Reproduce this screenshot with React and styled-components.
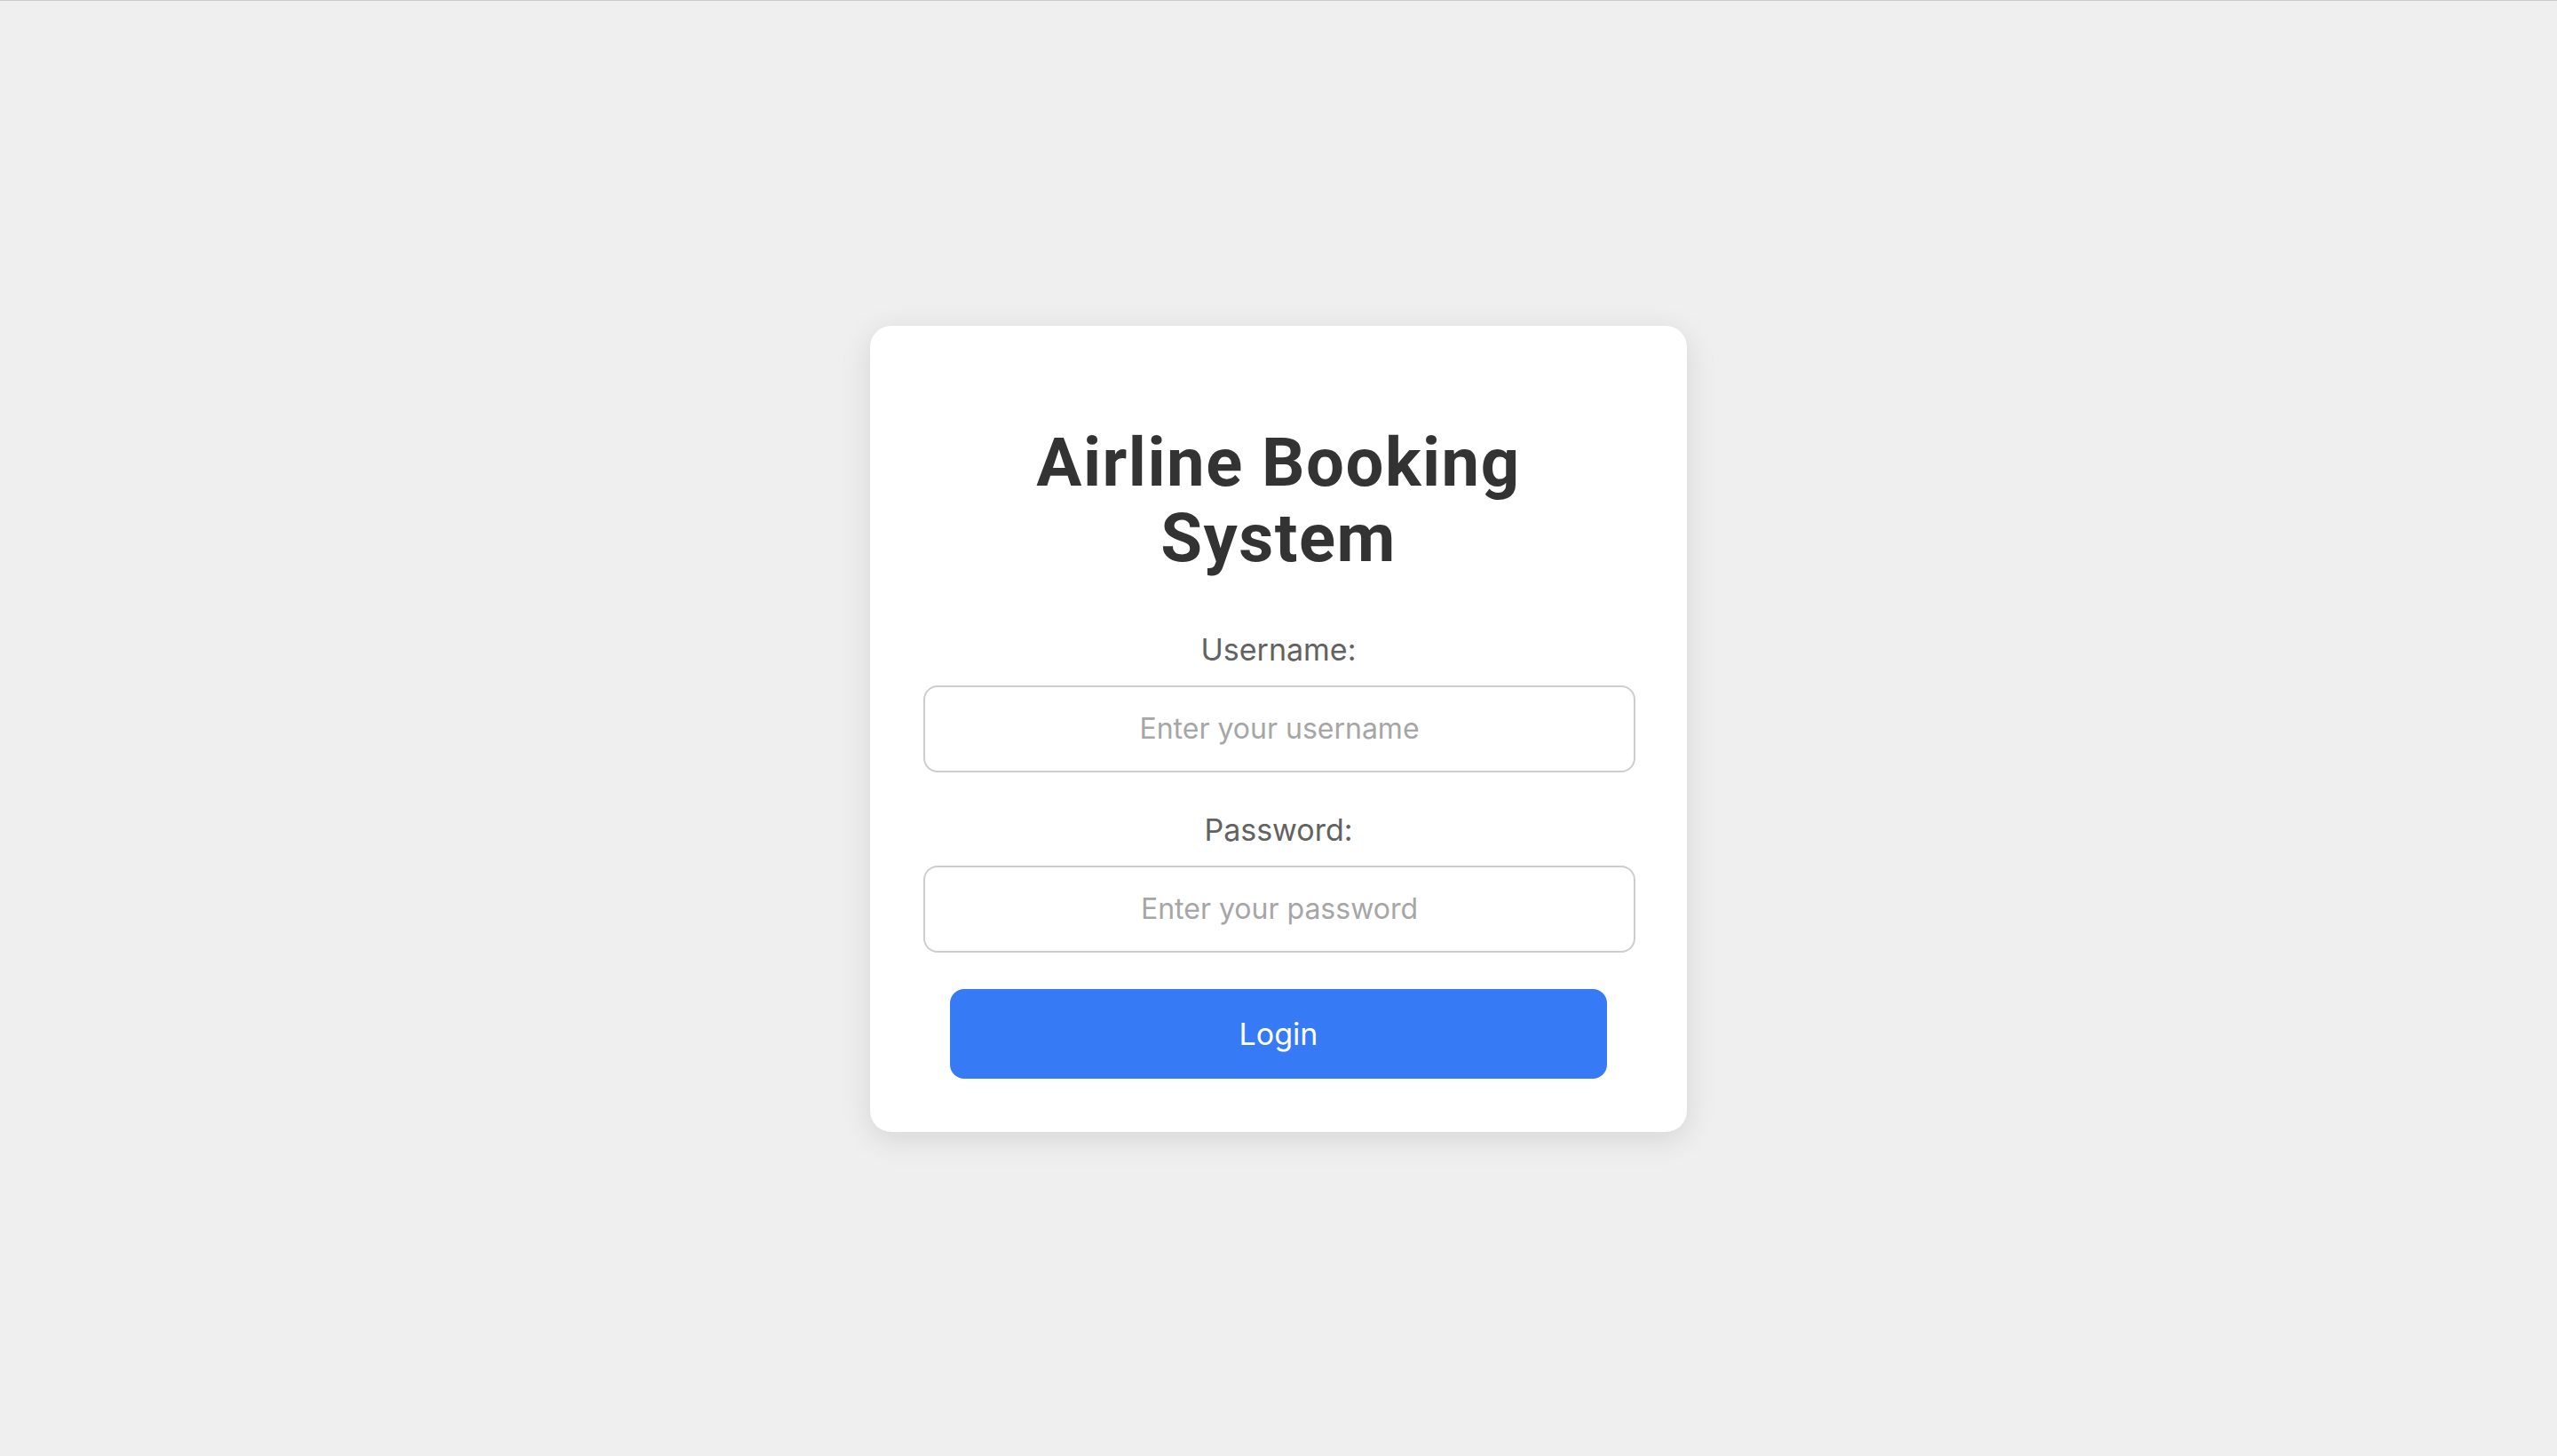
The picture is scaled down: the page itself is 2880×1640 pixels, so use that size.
import React from 'react'
import styled, { createGlobalStyle } from 'styled-components'

const GlobalStyle = createGlobalStyle`
  html, body {
    margin: 0;
    padding: 0;
    background: #efefef;
  }
  body {
    border-top: 1px solid #cbcbcb;
    font-family: Inter, "Noto Sans", sans-serif;
  }
  * { box-sizing: border-box; }
`

const Page = styled.main`
  min-height: calc(100vh - 1px);
  display: flex;
  align-items: center;
  justify-content: center;
`

const Card = styled.form`
  width: 920px;
  padding: 60px;
  background: #fff;
  border-radius: 24px;
  box-shadow: 0 8px 36px rgba(0, 0, 0, 0.11);
  display: flex;
  flex-direction: column;
  align-items: center;
`

const Title = styled.h1`
  margin: 52px 0 62px;
  font-family: Roboto, "Liberation Sans", sans-serif;
  font-weight: 700;
  font-size: 76px;
  letter-spacing: 1.5px;
  line-height: 85px;
  color: #333;
  text-align: center;
  width: 100%;
`

const Field = styled.div`
  width: 100%;
  display: flex;
  flex-direction: column;
  align-items: center;
  gap: 20px;
  margin-bottom: ${({ $last }) => ($last ? '41px' : '44px')};
`

const Label = styled.label`
  font-family: Inter, "Noto Sans", sans-serif;
  font-size: 34px;
  line-height: 41px;
  color: #626262;
`

const Input = styled.input`
  width: 802px;
  height: 98px;
  margin-left: 2px;
  border: 2px solid #cdcdcd;
  border-radius: 16px;
  background: #fff;
  font-family: Inter, "Noto Sans", sans-serif;
  font-size: 32px;
  color: #333;
  text-align: center;
  outline: none;

  &::placeholder {
    color: #a6a6a6;
  }
`

const Button = styled.button`
  width: 740px;
  height: 101px;
  border: none;
  border-radius: 16px;
  background: #377af5;
  color: #fff;
  font-family: Inter, "Noto Sans", sans-serif;
  font-size: 34px;
  cursor: pointer;
`

export default function App() {
  return (
    <>
      <GlobalStyle />
      <Page>
        <Card onSubmit={(e) => e.preventDefault()}>
          <Title>Airline Booking System</Title>
          <Field>
            <Label htmlFor="username">Username:</Label>
            <Input id="username" type="text" placeholder="Enter your username" />
          </Field>
          <Field $last>
            <Label htmlFor="password">Password:</Label>
            <Input id="password" type="password" placeholder="Enter your password" />
          </Field>
          <Button type="submit">Login</Button>
        </Card>
      </Page>
    </>
  )
}
